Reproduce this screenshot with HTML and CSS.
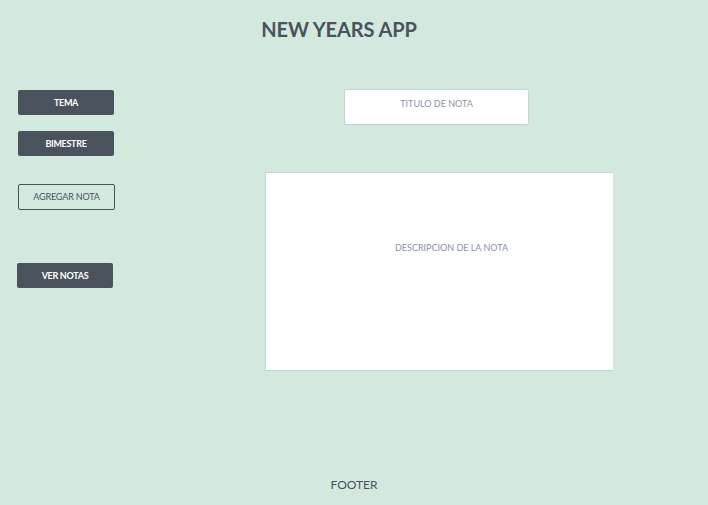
FILE: index.html
```html
<!DOCTYPE html>
<html lang="es">
<head>
<meta charset="utf-8">
<title>New Years App</title>
<link rel="stylesheet" href="styles.css">
</head>
<body>
<div class="page">
  <header class="header">
    <h1 class="title">NEW YEARS APP</h1>
  </header>
  <main class="main">
    <nav class="sidebar">
      <button class="btn btn-solid">TEMA</button>
      <button class="btn btn-solid btn-second">BIMESTRE</button>
      <button class="btn btn-outline">AGREGAR NOTA</button>
      <button class="btn btn-solid btn-view">VER NOTAS</button>
    </nav>
    <section class="editor">
      <input class="note-title" type="text" placeholder="TITULO DE NOTA">
      <div class="note-body">DESCRIPCION DE LA NOTA</div>
    </section>
  </main>
  <footer class="footer">FOOTER</footer>
</div>
</body>
</html>
```
FILE: styles.css
```css
* { box-sizing: border-box; }
html, body { margin: 0; padding: 0; }
body {
  background: #d4e9de;
  font-family: Lato, "Open Sans", sans-serif;
  color: #4a525e;
}
.page {
  height: 505px;
  display: flex;
  flex-direction: column;
}
.header {
  display: flex;
  justify-content: center;
  padding: 17px 30px 0 0;
  height: 89px;
}
.title {
  margin: 0;
  font-size: 20px;
  font-weight: 700;
  line-height: 24px;
  color: #4a525e;
  letter-spacing: -0.1px;
}
.main {
  flex: 1;
  display: grid;
  grid-template-columns: 170px 1fr;
}
.sidebar {
  display: flex;
  flex-direction: column;
  align-items: flex-start;
  padding: 1px 0 0 18px;
}
.btn {
  width: 96px;
  height: 25px;
  border-radius: 2px;
  font-family: Lato, sans-serif;
  font-size: 9px;
  padding: 0 0 1px;
  letter-spacing: -0.3px;
  cursor: pointer;
}
.btn-solid {
  background: #4a525e;
  color: #ffffff;
  border: none;
  font-weight: 700;
}
.btn-second { margin-top: 16px; }
.btn-outline {
  margin-top: 28px;
  height: 26px;
  width: 97px;
  background: transparent;
  border: 1px solid #4a525e;
  color: #4a525e;
  font-weight: 400;
  letter-spacing: -0.15px;
}
.btn-view {
  margin-top: 53px;
  margin-left: -1px;
}
.editor {
  display: flex;
  flex-direction: column;
  align-items: flex-start;
}
.note-title {
  margin-left: 174px;
  width: 185px;
  height: 36px;
  border: 1px solid #c9d2dc;
  border-radius: 2px;
  background: #ffffff;
  font-family: Lato, sans-serif;
  font-size: 9px;
  text-align: center;
  padding: 0 0 8px;
  color: #8a94a6;
}
.note-title::placeholder { color: #8a94a6; }
.note-body {
  margin: 47px 0 0 95px;
  width: 348px;
  height: 199px;
  background: #ffffff;
  border: 1px solid #c9d2dc;
  border-width: 1px 0 1px 1px;
  display: flex;
  justify-content: center;
  padding: 69px 0 0 24px;
  font-size: 9px;
  color: #8a94a6;
}
.footer {
  height: 41px;
  text-align: center;
  font-size: 12px;
  font-weight: 400;
  line-height: 14px;
  color: #4a525e;
  padding-top: 14px;
}
```
